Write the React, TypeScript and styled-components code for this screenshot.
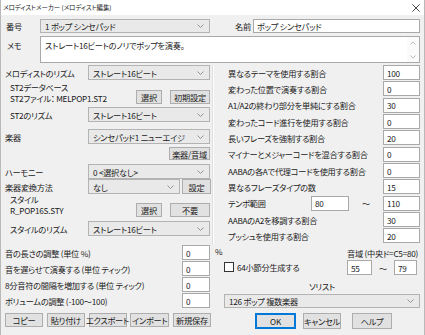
import React from 'react';
import styled, { createGlobalStyle } from 'styled-components';

const GlobalStyle = createGlobalStyle`
  html, body {
    margin: 0;
    padding: 0;
    background: #f0f0f0;
  }
  body {
    font-family: "Noto Sans CJK JP", "Noto Sans", sans-serif;
    font-size: 8.2px;
    letter-spacing: -0.25px;
    font-feature-settings: "palt" 1;
    color: #1a1a1a;
  }
`;

const Window = styled.div`
  width: 425px;
  height: 335px;
  box-sizing: border-box;
  border-left: 1px solid #b9b9b9;
  border-right: 1px solid #b9b9b9;
  background: #f0f0f0;
  overflow: hidden;
`;

const TitleBar = styled.div`
  height: 15px;
  background: #fff;
  display: flex;
  align-items: center;
  justify-content: space-between;
  padding: 0 4px 0 2px;
`;

const TitleText = styled.span`
  font-size: 6.4px;
  letter-spacing: 0;
  color: #222;
`;

const Body = styled.div`
  padding: 0 4px;
`;

const Row = styled.div<{ $h?: number; $mt?: number }>`
  display: flex;
  align-items: center;
  height: ${(p) => p.$h ?? 15}px;
  margin-top: ${(p) => p.$mt ?? 0}px;
`;

const Label = styled.span<{ $w?: number; $pl?: number }>`
  width: ${(p) => (p.$w ? `${p.$w}px` : 'auto')};
  padding-left: ${(p) => p.$pl ?? 0}px;
  box-sizing: border-box;
  white-space: nowrap;
  flex-shrink: 0;
`;

const ComboBox = styled.div<{ $w?: number }>`
  width: ${(p) => (p.$w ? `${p.$w}px` : 'auto')};
  flex: ${(p) => (p.$w ? '0 0 auto' : '1')};
  height: 100%;
  box-sizing: border-box;
  border: 1px solid #b3b3b3;
  background: #e9e9e9;
  display: flex;
  align-items: center;
  justify-content: space-between;
  padding: 0 5px 0 4px;
  white-space: nowrap;
  overflow: hidden;
`;

const TextBox = styled.div<{ $w?: number }>`
  width: ${(p) => (p.$w ? `${p.$w}px` : 'auto')};
  flex: ${(p) => (p.$w ? '0 0 auto' : '1')};
  height: 100%;
  box-sizing: border-box;
  border: 1px solid #a9a9a9;
  background: #fff;
  display: flex;
  align-items: center;
  padding-left: 3px;
  white-space: nowrap;
  overflow: hidden;
`;

const Button = styled.div<{ $w: number; $h?: number; $default?: boolean }>`
  width: ${(p) => p.$w}px;
  height: ${(p) => p.$h ?? 14}px;
  box-sizing: border-box;
  flex-shrink: 0;
  border: 1px solid ${(p) => (p.$default ? '#0078d7' : '#adadad')};
  box-shadow: ${(p) => (p.$default ? 'inset 0 0 0 1px #0078d7' : 'none')};
  background: #e1e1e1;
  display: flex;
  align-items: center;
  justify-content: center;
  white-space: nowrap;
`;

const Arrow = () => (
  <svg width="7" height="4" viewBox="0 0 7 4" style={{ flexShrink: 0 }}>
    <path d="M0.5 0.5 L3.5 3.5 L6.5 0.5" fill="none" stroke="#8a8a8a" strokeWidth="0.9" />
  </svg>
);

const Combo = ({ value, w }: { value: string; w?: number }) => (
  <ComboBox $w={w}>
    <span>{value}</span>
    <Arrow />
  </ComboBox>
);

const TopRow = styled(Row)`
  margin-top: 4px;
  height: 14px;
`;

const MemoRow = styled.div`
  display: flex;
  height: 27px;
  margin-top: 3px;
`;

const MemoLabel = styled.span`
  width: 35px;
  padding: 3px 0 0 2px;
  box-sizing: border-box;
`;

const Memo = styled.div`
  flex: 1;
  border: 1px solid #a9a9a9;
  background: #fff;
  display: flex;
  justify-content: space-between;
  padding: 2px 0 0 4px;
  box-sizing: border-box;
`;

const ScrollBar = styled.div`
  width: 12px;
  margin-top: -2px;
  display: flex;
  flex-direction: column;
  justify-content: space-between;
  align-items: center;
  padding: 4px 0 3px;
  background: #fbfbfb;
`;

const Columns = styled.div`
  display: flex;
  margin-top: 2px;
`;

const LeftCol = styled.div`
  width: 207px;
  flex-shrink: 0;
`;

const RightSide = styled.div`
  flex: 1;
`;

const RightCol = styled.div`
  height: 180px;
  border-left: 1px solid #e0e0e0;
  box-shadow: inset 1px 0 #fdfdfd;
`;

const RightBottom = styled.div`
  padding-left: 12px;
`;

const Block = styled.div<{ $h: number; $mt?: number }>`
  display: flex;
  height: ${(p) => p.$h}px;
  margin-top: ${(p) => p.$mt ?? 0}px;
`;

const Lines = styled.div<{ $w: number }>`
  width: ${(p) => p.$w}px;
  padding-left: 5px;
  box-sizing: border-box;
  display: flex;
  flex-direction: column;
  line-height: 11px;
  white-space: nowrap;
`;

const BlockButtons = styled.div`
  display: flex;
  gap: 8px;
  margin-top: 9px;
`;

const RightButtonRow = styled(Row)`
  justify-content: flex-end;
  padding-right: 2px;
`;

const InputRows = styled.div`
  margin-top: 9px;
  display: flex;
  flex-direction: column;
  gap: 1px;
`;

const Unit = styled.span`
  margin: -4px -14px 0 5px;
  width: 9px;
`;

const ButtonBar = styled.div<{ $mt: number }>`
  display: flex;
  justify-content: space-between;
  margin-top: ${(p) => p.$mt}px;
  padding-right: 1px;
`;

const RateList = styled.div`
  display: grid;
  grid-auto-rows: 15px;
  row-gap: 1.35px;
  padding-left: 15px;
`;

const RateRow = styled.div`
  display: flex;
  align-items: center;
`;

const RateLabel = styled.span`
  flex: 1;
  white-space: nowrap;
`;

const Tilde = styled.span<{ $w: number }>`
  width: ${(p) => p.$w}px;
  text-align: center;
  flex-shrink: 0;
`;

const LowerRight = styled.div`
  display: flex;
  justify-content: space-between;
  margin-top: 3px;
  height: 32px;
`;

const CheckRow = styled.div`
  display: flex;
  align-items: center;
  gap: 3px;
  margin-top: 13px;
  height: 12px;
`;

const CheckBox = styled.span`
  width: 10px;
  height: 10px;
  box-sizing: border-box;
  border: 1px solid #333;
  background: #fff;
`;

const RangeGroup = styled.div`
  width: 73px;
  display: flex;
  flex-direction: column;
`;

const RangeTitle = styled.span`
  height: 12px;
  line-height: 11px;
  white-space: nowrap;
`;

const Caption = styled.div`
  text-align: center;
  height: 12px;
  line-height: 12px;
`;

const OkBar = styled.div`
  display: flex;
  margin-top: 5px;
  padding-left: 31px;
`;

const rates: [string, string][] = [
  ['異なるテーマを使用する割合', '100'],
  ['変わった位置で演奏する割合', '0'],
  ['A1/A2の終わり部分を単純にする割合', '30'],
  ['変わったコード進行を使用する割合', '0'],
  ['長いフレーズを強制する割合', '20'],
  ['マイナーとメジャーコードを混合する割合', '0'],
  ['AABAの各Aで代理コードを使用する割合', '0'],
  ['異なるフレーズタイプの数', '15'],
];

const rates2: [string, string][] = [
  ['AABAのA2を移調する割合', '30'],
  ['プッシュを使用する割合', '20'],
];

const adjustments: [string, string, boolean][] = [
  ['音の長さの調整 (単位 %)', '0', true],
  ['音を遅らせて演奏する (単位 ティック)', '0', false],
  ['8分音符の間隔を増加する (単位 ティック)', '0', false],
  ['ボリュームの調整 (-100〜100)', '0', false],
];

function RatePanel() {
  return (
    <RightSide>
      <RightCol>
        <RateList>
          {rates.map(([label, value]) => (
            <RateRow key={label}>
              <RateLabel>{label}</RateLabel>
              <TextBox $w={37}>{value}</TextBox>
            </RateRow>
          ))}
          <RateRow>
            <RateLabel>テンポ範囲</RateLabel>
            <TextBox $w={38}>80</TextBox>
            <Tilde $w={34}>〜</Tilde>
            <TextBox $w={37}>110</TextBox>
          </RateRow>
          {rates2.map(([label, value]) => (
            <RateRow key={label}>
              <RateLabel>{label}</RateLabel>
              <TextBox $w={37}>{value}</TextBox>
            </RateRow>
          ))}
        </RateList>
      </RightCol>
      <RightBottom>
        <LowerRight>
          <CheckRow>
            <CheckBox />
            <span>64小節分生成する</span>
          </CheckRow>
          <RangeGroup>
            <RangeTitle>音域 (中央ド=C5=80)</RangeTitle>
            <Row>
              <TextBox $w={25}>55</TextBox>
              <Tilde $w={22}>〜</Tilde>
              <TextBox $w={23}>79</TextBox>
            </Row>
          </RangeGroup>
        </LowerRight>
        <Caption>ソリスト</Caption>
        <Row $h={14} $mt={2}>
          <Combo value="126 ポップ 複数楽器" />
        </Row>
        <OkBar>
          <Button $w={41} $h={16} $default>OK</Button>
          <Button $w={38} $h={16} style={{ marginLeft: 7 }}>キャンセル</Button>
          <Button $w={40} $h={16} style={{ marginLeft: 11 }}>ヘルプ</Button>
        </OkBar>
      </RightBottom>
    </RightSide>
  );
}

export default function App() {
  return (
    <Window>
      <GlobalStyle />
      <TitleBar>
        <TitleText>メロディストメーカー (メロディスト編集)</TitleText>
        <svg width="8" height="8" viewBox="0 0 8 8">
          <path d="M0.5 0.5 L7.5 7.5 M7.5 0.5 L0.5 7.5" stroke="#333" strokeWidth="0.9" />
        </svg>
      </TitleBar>
      <Body>
        <TopRow>
          <Label $w={35} $pl={1}>番号</Label>
          <Combo value="1 ポップ シンセパッド" w={170} />
          <Label $w={43} $pl={25}>名前</Label>
          <TextBox>ポップ シンセパッド</TextBox>
        </TopRow>
        <MemoRow>
          <MemoLabel>メモ</MemoLabel>
          <Memo>
            <span>ストレート16ビートのノリでポップを演奏。</span>
            <ScrollBar>
              <svg width="6" height="4" viewBox="0 0 6 4">
                <path d="M0.5 3.5 L3 1 L5.5 3.5" fill="none" stroke="#b5b5b5" strokeWidth="0.9" />
              </svg>
              <svg width="6" height="4" viewBox="0 0 6 4">
                <path d="M0.5 0.5 L3 3 L5.5 0.5" fill="none" stroke="#b5b5b5" strokeWidth="0.9" />
              </svg>
            </ScrollBar>
          </Memo>
        </MemoRow>
        <Columns>
          <LeftCol>
            <Row $mt={0}>
              <Label $w={83}>メロディストのリズム</Label>
              <Combo value="ストレート16ビート" w={122} />
            </Row>
            <Block $h={25} $mt={1}>
              <Lines $w={131}>
                <span style={{ marginTop: 1 }}>ST2データベース</span>
                <span>ST2ファイル：&nbsp;MELPOP1.ST2</span>
              </Lines>
              <BlockButtons>
                <Button $w={26}>選択</Button>
                <Button $w={40}>初期設定</Button>
              </BlockButtons>
            </Block>
            <Row $mt={1}>
              <Label $w={83} $pl={5}>ST2のリズム</Label>
              <Combo value="ストレート16ビート" w={122} />
            </Row>
            <Row $mt={7}>
              <Label $w={83}>楽器</Label>
              <Combo value="シンセパッド1 ニューエイジ" w={122} />
            </Row>
            <RightButtonRow $h={13} $mt={3}>
              <Button $w={41} $h={13}>楽器/音域</Button>
            </RightButtonRow>
            <Row $mt={4}>
              <Label $w={83}>ハーモニー</Label>
              <Combo value="0 <選択なし>" w={122} />
            </Row>
            <Row $mt={0}>
              <Label $w={83}>楽器変換方法</Label>
              <Combo value="なし" w={92} />
              <Button $w={29} $h={15} style={{ marginLeft: 2 }}>設定</Button>
            </Row>
            <Block $h={24}>
              <Lines $w={131}>
                <span>スタイル</span>
                <span>R_POP16S.STY</span>
              </Lines>
              <BlockButtons>
                <Button $w={26}>選択</Button>
                <Button $w={40}>不要</Button>
              </BlockButtons>
            </Block>
            <Row $mt={3}>
              <Label $w={83} $pl={5}>スタイルのリズム</Label>
              <Combo value="ストレート16ビート" w={122} />
            </Row>
            <InputRows>
              {adjustments.map(([label, value, unit]) => (
                <Row key={label}>
                  <Label $w={177}>{label}</Label>
                  <TextBox $w={28}>{value}</TextBox>
                  {unit && <Unit>%</Unit>}
                </Row>
              ))}
            </InputRows>
            <ButtonBar $mt={5}>
              <Button $w={38}>コピー</Button>
              <Button $w={38}>貼り付け</Button>
              <Button $w={38}>エクスポート</Button>
              <Button $w={39}>インポート</Button>
              <Button $w={38}>新規保存</Button>
            </ButtonBar>
          </LeftCol>
          <RatePanel />
        </Columns>
      </Body>
    </Window>
  );
}
